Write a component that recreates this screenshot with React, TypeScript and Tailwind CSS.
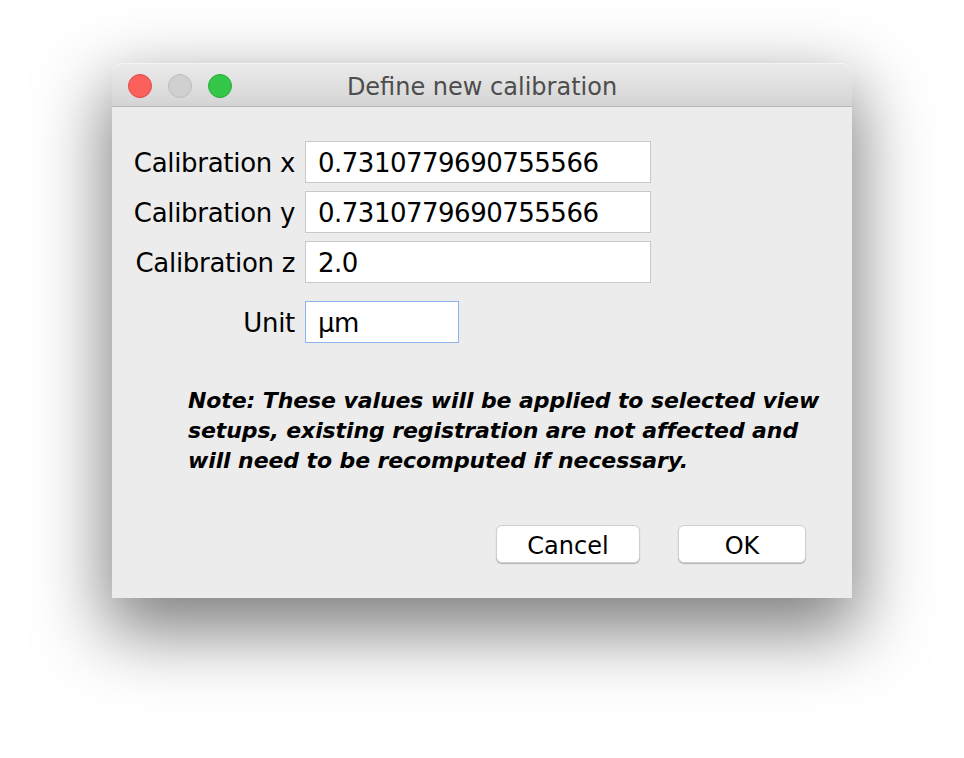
import React from "react";

const font = { fontFamily: '"DejaVu Sans", "Noto Sans", sans-serif' };

function Field({ value, w, focus }: { value: string; w: string; focus?: boolean }) {
  return (
    <div
      className={`${w} h-[42px] bg-white flex items-center pl-[12px] pt-[2px] text-[26px] tracking-[-0.5px] text-black border ${
        focus ? "border-[#8db4ea]" : "border-[#c9c9c9]"
      }`}
    >
      {value}
    </div>
  );
}

export default function App() {
  const rows = [
    { label: "Calibration x", value: "0.7310779690755566" },
    { label: "Calibration y", value: "0.7310779690755566" },
    { label: "Calibration z", value: "2.0" },
  ];
  return (
    <div className="w-[964px] h-[758px] bg-white pt-[63px] pl-[112px] overflow-hidden" style={font}>
      <div className="w-[740px] h-[535px] rounded-t-[10px] bg-[#ececec] shadow-[0_28px_70px_6px_rgba(0,0,0,0.5)] flex flex-col">
        <div className="relative h-[44px] shrink-0 rounded-t-[10px] bg-gradient-to-b from-[#ebebeb] to-[#d4d4d4] border-b border-[#b8b8b8] border-t border-t-[#f4f4f4] flex items-center justify-center">
          <div className="absolute left-[16px] top-[10px] flex gap-[16px]">
            <span className="w-[24px] h-[24px] rounded-full bg-[#fc605c] border border-[#de4a45]" />
            <span className="w-[24px] h-[24px] rounded-full bg-[#d0d0d0] border border-[#bdbdbd]" />
            <span className="w-[24px] h-[24px] rounded-full bg-[#34c749] border border-[#28ad37]" />
          </div>
          <span className="text-[24px] text-[#4d4d4d] leading-none pt-[3px]">Define new calibration</span>
        </div>
        <div className="flex flex-col pt-[34px]">
          <div className="grid grid-cols-[183px_346px] gap-x-[10px] gap-y-[8px] items-center">
            {rows.map((r) => (
              <React.Fragment key={r.label}>
                <div className="text-right text-[26px] text-black tracking-[-0.3px] pt-[2px]">{r.label}</div>
                <Field value={r.value} w="w-[346px]" />
              </React.Fragment>
            ))}
            <div className="text-right text-[26px] text-black mt-[10px] pt-[2px] tracking-[-0.3px]">Unit</div>
            <div className="mt-[10px]">
              <Field value="µm" w="w-[154px]" focus />
            </div>
          </div>
          <p className="mt-[43px] ml-[76px] text-[22px] leading-[30px] font-bold italic text-black tracking-[-0.1px] whitespace-nowrap">
            Note: These values will be applied to selected view
            <br />
            setups, existing registration are not affected and
            <br />
            will need to be recomputed if necessary.
          </p>
          <div className="mt-[49px] flex justify-end gap-[38px] pr-[46px]">
            <button className="w-[144px] h-[38px] pt-[3px] bg-white rounded-[6px] border border-[#cfcfcf] shadow-[0_1px_1px_rgba(0,0,0,0.25)] text-[24px] text-black leading-none" style={font}>
              Cancel
            </button>
            <button className="w-[128px] h-[38px] pt-[3px] bg-white rounded-[6px] border border-[#cfcfcf] shadow-[0_1px_1px_rgba(0,0,0,0.25)] text-[24px] text-black leading-none" style={font}>
              OK
            </button>
          </div>
        </div>
      </div>
    </div>
  );
}
